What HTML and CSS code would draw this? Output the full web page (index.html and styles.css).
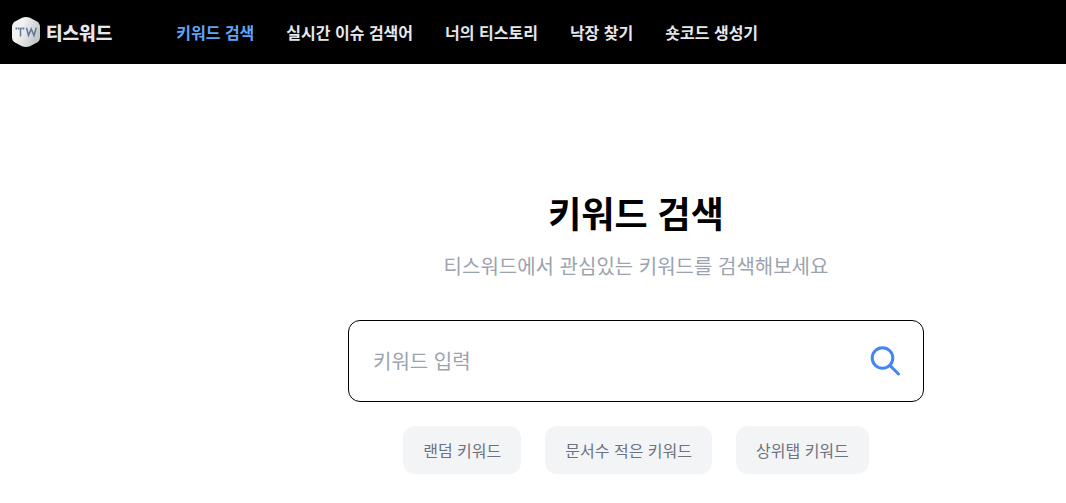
FILE: index.html
```html
<!DOCTYPE html>
<html lang="ko">
<head>
  <meta charset="UTF-8">
  <meta name="viewport" content="width=device-width, initial-scale=1.0">
  <title>티스워드 - 키워드 검색</title>
  <link rel="stylesheet" href="styles.css">
</head>
<body>

  <header class="header">
    <a class="logo" href="#">
      <svg class="logo-mark" viewBox="0 0 28 30" aria-hidden="true">
        <defs>
          <linearGradient id="shade" x1="0" y1="0" x2="1" y2="0.4">
            <stop offset="0.4" stop-color="#f2f2f2"/>
            <stop offset="1" stop-color="#c4c7c9"/>
          </linearGradient>
        </defs>
        <path d="M10 .8Q14-.8 18 .8L25 4.500Q28 6.500 28 10V20Q28 23.500 25 25.500L18 29.200Q14 30.800 10 29.200L3 25.500Q0 23.500 0 20V10Q0 6.500 3 4.500Z" fill="url(#shade)"/>
        <path d="M3.500 11.500H13" stroke="#5b7898" stroke-width="1.800" stroke-dasharray="1.600 .7" fill="none"/>
        <path d="M8.500 11V19.500M14.500 10.800L16.500 18.500L19.200 12L22 18.500L24.300 10.800" stroke="#5b7898" stroke-width="1.500" fill="none"/>
      </svg>
      <span>티스워드</span>
    </a>
    <nav class="nav">
      <a class="active" href="#">키워드 검색</a>
      <a href="#">실시간 이슈 검색어</a>
      <a href="#">너의 티스토리</a>
      <a href="#">낙장 찾기</a>
      <a href="#">숏코드 생성기</a>
    </nav>
  </header>

  <main class="main">
    <h1>키워드 검색</h1>
    <p class="description">티스워드에서 관심있는 키워드를 검색해보세요</p>

    <form class="search-box">
      <input type="text" placeholder="키워드 입력" aria-label="키워드 입력">
      <button type="submit" aria-label="검색">
        <svg viewBox="0 0 32 32" fill="none" stroke="#4285f4" stroke-width="3" stroke-linecap="round">
          <circle cx="12.500" cy="13" r="10.300"/>
          <path d="M20 20.500L28.500 29"/>
        </svg>
      </button>
    </form>

    <div class="shortcuts">
      <button type="button">랜덤 키워드</button>
      <button type="button">문서수 적은 키워드</button>
      <button type="button">상위탭 키워드</button>
    </div>
  </main>

</body>
</html>
```

FILE: styles.css
```css
* {
  box-sizing: border-box;
}

body {
  margin: 0;
  background: #fff;
  font-family: "Noto Sans CJK KR", "Noto Sans", sans-serif;
}

button,
input {
  font-family: inherit;
}

a {
  color: inherit;
  text-decoration: none;
}

.header {
  display: flex;
  align-items: center;
  gap: 64px;
  height: 64px;
  padding: 0 12px;
  background: #000;
  color: #e5e7eb;
  font-weight: 700;
  white-space: nowrap;
}

.logo {
  display: flex;
  align-items: center;
  gap: 6px;
  font-size: 18px;
  font-weight: 900;
}

.logo-mark {
  width: 28px;
  height: 30px;
}

.nav {
  display: flex;
  gap: 32px;
  font-size: 16px;
  line-height: 24px;
}

.nav .active {
  color: #60a5fa;
}

.main {
  display: flex;
  flex-direction: column;
  align-items: center;
  margin-left: 206px;
  padding: 128px 16px 24px;
}

h1 {
  margin: 0;
  font-size: 36px;
  font-weight: 700;
  line-height: 40px;
}

.description {
  margin: 20px 0 40px;
  color: #9ca3af;
  font-size: 20px;
  line-height: 28px;
}

.search-box {
  display: flex;
  align-items: center;
  width: 100%;
  max-width: 576px;
  height: 82px;
  padding: 0 21px 0 24px;
  border: 1px solid #000;
  border-radius: 12px;
}

.search-box input {
  flex: 1;
  min-width: 0;
  padding: 0;
  border: none;
  outline: none;
  background: none;
  font-size: 20px;
  line-height: 28px;
}

.search-box input::placeholder {
  color: #9ca3af;
}

.search-box button {
  padding: 0;
  border: none;
  background: none;
  cursor: pointer;
}

.search-box svg {
  display: block;
  width: 32px;
  height: 32px;
}

.shortcuts {
  display: flex;
  flex-wrap: wrap;
  justify-content: center;
  gap: 24px;
  margin-top: 24px;
}

.shortcuts button {
  padding: 12px 20px;
  border: none;
  border-radius: 12px;
  background: #f3f4f6;
  color: #6b7280;
  font-size: 16px;
  line-height: 24px;
  cursor: pointer;
}
```
